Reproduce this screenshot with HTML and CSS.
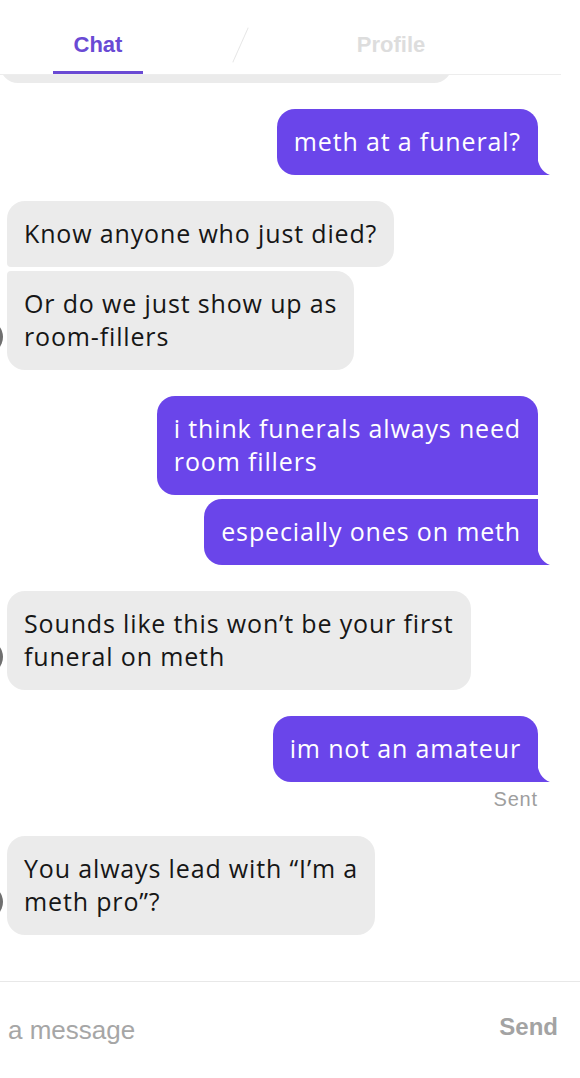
FILE: index.html
```html
<!doctype html>
<html>
<head>
    <title>Chat</title>
    <link rel="stylesheet" href="styles.css">
</head>
<body>
    <div class="screen">
        <header class="tabs">
            <div class="tab tab-active">Chat</div>
            <div class="tab-divider"></div>
            <div class="tab tab-profile">Profile</div>
        </header>

        <main class="thread">
            <div class="bubble bubble-in bubble-cut"></div>

            <div class="group group-out">
                <div class="bubble bubble-out tail">meth at a funeral?</div>
            </div>

            <div class="group group-in">
                <div class="avatar"></div>
                <div class="stack">
                    <div class="bubble bubble-in first">Know anyone who just died?</div>
                    <div class="bubble bubble-in last">Or do we just show up as<br>room-fillers</div>
                </div>
            </div>

            <div class="group group-out">
                <div class="bubble bubble-out first">i think funerals always need<br>room fillers</div>
                <div class="bubble bubble-out last tail">especially ones on meth</div>
            </div>

            <div class="group group-in">
                <div class="avatar"></div>
                <div class="stack">
                    <div class="bubble bubble-in">Sounds like this won’t be your first<br>funeral on meth</div>
                </div>
            </div>

            <div class="group group-out">
                <div class="bubble bubble-out tail">im not an amateur</div>
                <div class="status">Sent</div>
            </div>

            <div class="group group-in group-after-status">
                <div class="avatar"></div>
                <div class="stack">
                    <div class="bubble bubble-in">You always lead with “I’m a<br>meth pro”?</div>
                </div>
            </div>
        </main>

        <footer class="composer">
            <span class="composer-input">a message</span>
            <span class="composer-send">Send</span>
        </footer>
    </div>
</body>
</html>
```

FILE: styles.css
```css
body {
    margin: 0;
    background-color: #ffffff;
}
.screen {
    width: 580px;
    height: 1078px;
    display: flex;
    flex-direction: column;
    overflow: hidden;
}

/* tabs */
.tabs {
    position: relative;
    z-index: 1;
    display: flex;
    height: 74px;
    margin-right: 19px;
    background-color: #ffffff;
    border-bottom: 1px solid #ededed;
    font-family: "Liberation Sans", Arial, sans-serif;
    font-weight: bold;
    font-size: 22px;
    line-height: 22px;
}
.tab {
    box-sizing: border-box;
    width: 90px;
    height: 74px;
    padding-top: 34px;
    text-align: center;
    color: #dddddd;
}
.tab-active {
    margin-left: 53px;
    color: #6a4ad4;
    border-bottom: 3px solid #6a4ad4;
}
.tab-divider {
    width: 1px;
    height: 38px;
    margin-top: 26px;
    margin-left: 97px;
    background-color: #e6e6e6;
    transform: rotate(24deg);
}
.tab-profile {
    margin-left: 105px;
}

/* messages */
.thread {
    flex: 1;
    display: flex;
    flex-direction: column;
    font-family: "Open Sans", sans-serif;
    font-size: 25px;
    letter-spacing: 0.85px;
    line-height: 33px;
}
.group {
    display: flex;
    flex-direction: column;
    gap: 4px;
    margin-top: 26px;
}
.group-out {
    align-items: flex-end;
    padding-right: 42px;
}
.group-in {
    flex-direction: row;
    align-items: flex-end;
    gap: 4px;
}
.group-after-status {
    margin-top: 26px;
}
.stack {
    display: flex;
    flex-direction: column;
    align-items: flex-start;
    gap: 4px;
}
.avatar {
    flex: none;
    width: 34px;
    height: 34px;
    margin-left: -31px;
    margin-bottom: 16px;
    border-radius: 50%;
    background-color: #6f6f6f;
}
.bubble {
    position: relative;
    padding: 16px 17px 17px;
    border-radius: 18px;
    white-space: nowrap;
}
.bubble-in {
    background-color: #ebebeb;
    color: #161616;
}
.bubble-out {
    background-color: #6a45ea;
    color: #ffffff;
}
.bubble-cut {
    width: 452px;
    height: 38px;
    padding: 0;
    margin-top: -30px;
    box-sizing: border-box;
}
.bubble-in.first {
    border-bottom-left-radius: 4px;
}
.bubble-in.last {
    border-top-left-radius: 4px;
}
.bubble-out.first {
    border-bottom-right-radius: 0;
}
.bubble-out.last {
    border-top-right-radius: 0;
}
.tail {
    border-bottom-right-radius: 0;
}
.tail::after {
    content: "";
    position: absolute;
    right: -12px;
    bottom: 0;
    width: 13px;
    height: 20px;
    background-color: #6a45ea;
    clip-path: path('M0 0 C1 10 5 17 13 20 L0 20 Z');
}
.status {
    margin-top: 2px;
    font-family: "Liberation Sans", Arial, sans-serif;
    font-size: 20px;
    line-height: 22px;
    color: #9e9e9e;
}

/* composer */
.composer {
    display: flex;
    align-items: center;
    justify-content: space-between;
    height: 96px;
    padding: 0 22px 0 8px;
    border-top: 1px solid #e8e8e8;
    font-family: "Liberation Sans", Arial, sans-serif;
}
.composer-input {
    font-size: 26px;
    color: #a6a6a6;
}
.composer-send {
    font-size: 24px;
    font-weight: bold;
    color: #a3a3a3;
    margin-bottom: 6px;
}
```
